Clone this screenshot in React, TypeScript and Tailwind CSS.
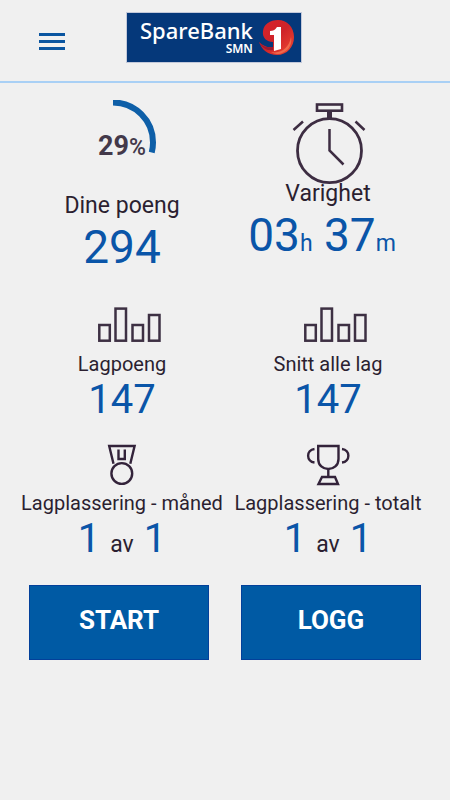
import type { ReactNode } from 'react'

const PERCENT = 29
const RING_LENGTH = 2 * Math.PI * 40

function Logo() {
  return (
    <a
      href="#"
      aria-label="SpareBank 1 SMN"
      className="flex h-[51px] w-44 items-start gap-1.5 border border-[#c3c9da] bg-[#05387a] pl-[13px] font-['Noto_Sans',sans-serif] text-white"
    >
      <span className="flex flex-col items-end">
        <span className="pt-1 text-[22px] leading-[26px] font-medium">SpareBank</span>
        <span className="text-[12px] leading-3 font-semibold">SMN</span>
      </span>
      <svg viewBox="0 0 36 36" className="mt-[7px] h-9 w-9 shrink-0" aria-hidden="true">
        <defs>
          <linearGradient id="swirl" x1="0" y1="0" x2="1" y2="1">
            <stop offset="0" stopColor="#d8242b" />
            <stop offset="0.5" stopColor="#cf2329" />
            <stop offset="1" stopColor="#ef4a32" />
          </linearGradient>
        </defs>
        <path
          d="M4 11C5 4 11 0 19 0C28 0 35 7 35 17C35 27 28 35 18 35C9 35 3 30 0 22C4 26 9 28 14 27V22C8 22 3 18 4 11Z"
          fill="url(#swirl)"
        />
        <path d="M0 22C4 27 9 28 14 27V30C8 31 3 28 0 22Z" fill="#9c1a30" />
        <path d="M12 32C22 34 30 28 32 17C34 26 27 34 18 34C16 34 14 33 12 32Z" fill="#f0694b" />
        <path d="M11 11C14 11 16 10 18 7H22V29L15 31V15H11Z" fill="#fff" />
      </svg>
    </a>
  )
}

function ProgressRing() {
  return (
    <div className="grid h-[92px] place-items-center">
      <svg viewBox="0 0 104 92" className="col-start-1 row-start-1 h-[92px] w-[104px]" aria-hidden="true">
        <circle
          cx="43"
          cy="42.5"
          r="40"
          fill="none"
          stroke="#0e5fa8"
          strokeWidth="6"
          strokeDasharray={`${(PERCENT / 100) * RING_LENGTH} ${RING_LENGTH}`}
          transform="rotate(-90 43 42.5)"
        />
      </svg>
      <p className="col-start-1 row-start-1 text-[27px] leading-8 font-bold text-[#43394a]">
        {PERCENT}
        <span className="text-[23px] leading-none font-medium">%</span>
      </p>
    </div>
  )
}

function StopwatchIcon() {
  return (
    <svg viewBox="0 0 80 85" className="-mb-[5px] h-[85px] w-20" fill="none" stroke="#3d2d42" aria-hidden="true">
      <rect x="29" y="4.5" width="25" height="6.2" strokeWidth="2.6" />
      <path d="M41.5 11.5V18" strokeWidth="5" />
      <circle cx="41.5" cy="50.7" r="32" strokeWidth="2.8" />
      <path d="M41.5 29V50.5L55.5 64.5M5.5 30L15 21.5M67.5 21.5L76.5 30" strokeWidth="2.5" />
    </svg>
  )
}

function BarsIcon() {
  return (
    <svg viewBox="0 -1 64 48" className="ml-4 h-12 w-16" fill="none" stroke="#3d3043" strokeWidth="2.5" aria-hidden="true">
      <rect x="1.3" y="20" width="10.5" height="15.7" />
      <rect x="17.5" y="3.6" width="10.5" height="32.1" />
      <rect x="34.5" y="20" width="10.5" height="15.7" />
      <rect x="51" y="10" width="10.5" height="25.7" />
    </svg>
  )
}

function MedalIcon() {
  return (
    <svg viewBox="0 -1 48 48" className="h-12 w-12" fill="none" stroke="#33233a" strokeWidth="2.4" aria-hidden="true">
      <path d="M15.5 19.7L11.2 2H36.6L32.3 19.7" />
      <path d="M20.5 5.5V15H26.8V5.5" />
      <circle cx="23.8" cy="29.5" r="10.4" />
    </svg>
  )
}

function TrophyIcon() {
  return (
    <svg viewBox="0 -1 48 48" className="h-12 w-12" fill="none" stroke="#33233a" strokeWidth="2.4" aria-hidden="true">
      <path d="M14.2 2H34.5V15C34.5 21.5 29.5 25 24.3 25S14.2 21.5 14.2 15Z" />
      <path d="M10.5 5C2 6 2 17.5 10.5 18.5M38 5C46.5 6 46.5 17.5 38 18.5" />
      <path d="M24.3 25V33M18 33H31L34 40H14.5Z" />
    </svg>
  )
}

function Stat({ icon, label, children }: { icon: ReactNode; label: string; children: ReactNode }) {
  return (
    <section className="flex flex-col items-center">
      {icon}
      <h2 className="text-xl leading-6 whitespace-nowrap">{label}</h2>
      <p className="text-[40px] leading-12 text-[#0a55a8]">{children}</p>
    </section>
  )
}

function Placement({ rank, total }: { rank: number; total: number }) {
  return (
    <>
      {rank} <span className="text-[23px] leading-none text-[#2b1f30]">av</span> {total}
    </>
  )
}

export default function App() {
  return (
    <div className="min-h-screen bg-[#f0f0f0] font-[Roboto,sans-serif] text-[#2b1f30]">
      <header className="flex h-[83px] items-start border-b-2 border-[#a9d0f5] pt-3 pl-[39px]">
        <button type="button" aria-label="Meny" className="mt-[21px] mr-[61px] flex w-[26px] flex-col gap-1">
          <span className="h-[3px] w-full bg-[#0a55a0]" />
          <span className="h-[3px] w-full bg-[#0a55a0]" />
          <span className="h-[3px] w-full bg-[#0a55a0]" />
        </button>
        <Logo />
      </header>

      <main>
        <div className="grid grid-cols-2 px-[19px] pt-[17px]">
          <section className="flex flex-col items-center">
            <ProgressRing />
            <h2 className="text-[23px] leading-7">Dine poeng</h2>
            <p className="text-[46px] leading-[54px] text-[#0a55a8]">294</p>
          </section>
          <section className="flex flex-col items-center">
            <StopwatchIcon />
            <h2 className="text-[23px] leading-7">Varighet</h2>
            <p className="pr-3 text-[46px] leading-[54px] text-[#0a55a8]">
              03<span className="text-[23px] leading-none">h</span> 37
              <span className="text-[23px] leading-none">m</span>
            </p>
          </section>
        </div>

        <div className="grid grid-cols-2 px-[19px] pt-[30px]">
          <Stat icon={<BarsIcon />} label="Lagpoeng">147</Stat>
          <Stat icon={<BarsIcon />} label="Snitt alle lag">147</Stat>
        </div>

        <div className="grid grid-cols-2 px-[19px] pt-[19px]">
          <Stat icon={<MedalIcon />} label="Lagplassering - måned">
            <Placement rank={1} total={1} />
          </Stat>
          <Stat icon={<TrophyIcon />} label="Lagplassering - totalt">
            <Placement rank={1} total={1} />
          </Stat>
        </div>

        <div className="grid grid-cols-2 gap-8 px-[29px] pt-[22px] pb-6">
          <button type="button" className="h-[75px] border border-[#03409a] bg-[#005aa4] pb-1 text-[26px] font-bold text-white">
            START
          </button>
          <button type="button" className="h-[75px] border border-[#03409a] bg-[#005aa4] pb-1 text-[26px] font-bold text-white">
            LOGG
          </button>
        </div>
      </main>
    </div>
  )
}
